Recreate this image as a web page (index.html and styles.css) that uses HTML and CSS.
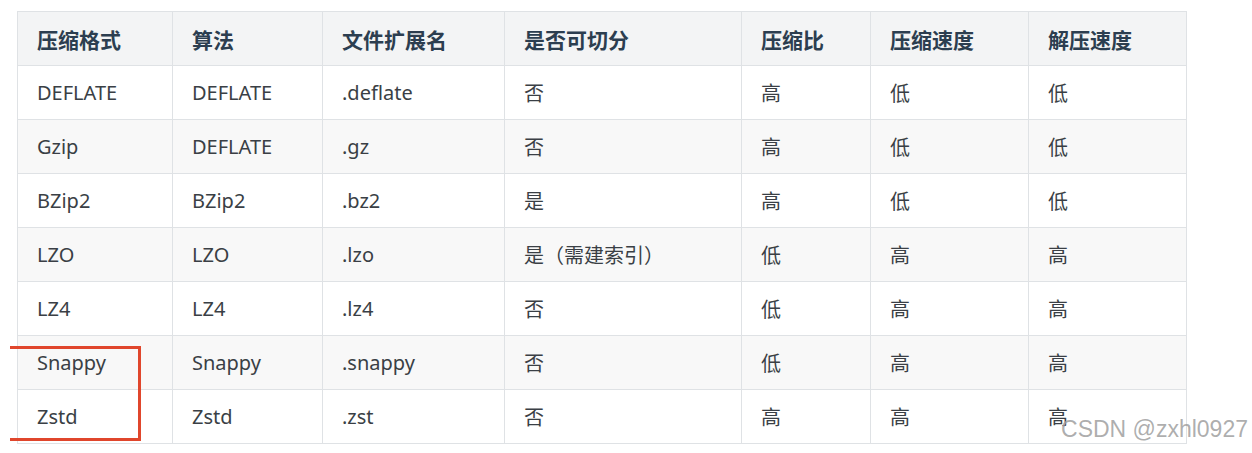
FILE: index.html
```html
<!DOCTYPE html>
<html lang="zh">
<head>
<meta charset="utf-8">
<link rel="stylesheet" href="styles.css">
</head>
<body>
<div class="page">
  <table class="codec-table">
    <colgroup>
      <col class="c1"><col class="c2"><col class="c3"><col class="c4"><col class="c5"><col class="c6"><col class="c7">
    </colgroup>
    <thead>
      <tr><th>压缩格式</th><th>算法</th><th>文件扩展名</th><th>是否可切分</th><th>压缩比</th><th>压缩速度</th><th>解压速度</th></tr>
    </thead>
    <tbody>
      <tr><td>DEFLATE</td><td>DEFLATE</td><td>.deflate</td><td>否</td><td>高</td><td>低</td><td>低</td></tr>
      <tr><td>Gzip</td><td>DEFLATE</td><td>.gz</td><td>否</td><td>高</td><td>低</td><td>低</td></tr>
      <tr><td>BZip2</td><td>BZip2</td><td>.bz2</td><td>是</td><td>高</td><td>低</td><td>低</td></tr>
      <tr><td>LZO</td><td>LZO</td><td>.lzo</td><td>是（需建索引）</td><td>低</td><td>高</td><td>高</td></tr>
      <tr><td>LZ4</td><td>LZ4</td><td>.lz4</td><td>否</td><td>低</td><td>高</td><td>高</td></tr>
      <tr><td>Snappy</td><td>Snappy</td><td>.snappy</td><td>否</td><td>低</td><td>高</td><td>高</td></tr>
      <tr><td>Zstd</td><td>Zstd</td><td>.zst</td><td>否</td><td>高</td><td>高</td><td>高</td></tr>
    </tbody>
  </table>
  <div class="highlight-box"></div>
  <div class="watermark">CSDN @zxhl0927</div>
</div>
</body>
</html>
```
FILE: styles.css
```css
html, body {
  margin: 0;
  padding: 0;
  background: #ffffff;
}
.page {
  position: relative;
  width: 1252px;
  height: 453px;
  overflow: hidden;
  padding: 11px 0 0 17px;
  box-sizing: border-box;
  font-family: "Noto Sans", "Noto Sans CJK SC", sans-serif;
}
.codec-table {
  border-collapse: collapse;
  table-layout: fixed;
  width: 1169px;
  font-size: 20px;
  color: #3a3f45;
}
.c1 { width: 155px; }
.c2 { width: 150px; }
.c3 { width: 182px; }
.c4 { width: 237px; }
.c5 { width: 129px; }
.c6 { width: 158px; }
.c7 { width: 158px; }
.codec-table th,
.codec-table td {
  border: 1px solid #dfe2e5;
  height: 54px;
  padding: 0 0 0 19px;
  text-align: left;
  vertical-align: middle;
  box-sizing: border-box;
  white-space: nowrap;
}
.codec-table th {
  background: #f3f4f5;
  font-weight: 700;
  color: #2c3e50;
  font-size: 21px;
}
.codec-table tbody tr:nth-child(even) td {
  background: #f8f8f8;
}
.highlight-box {
  position: absolute;
  left: 10px;
  top: 346px;
  width: 128px;
  height: 89px;
  border: 3px solid #e0462c;
  border-left: none;
}
.watermark {
  position: absolute;
  right: 4px;
  top: 416px;
  font-family: "Liberation Sans", Arial, sans-serif;
  font-size: 23px;
  color: rgba(160, 160, 160, 0.85);
  white-space: nowrap;
}
```
